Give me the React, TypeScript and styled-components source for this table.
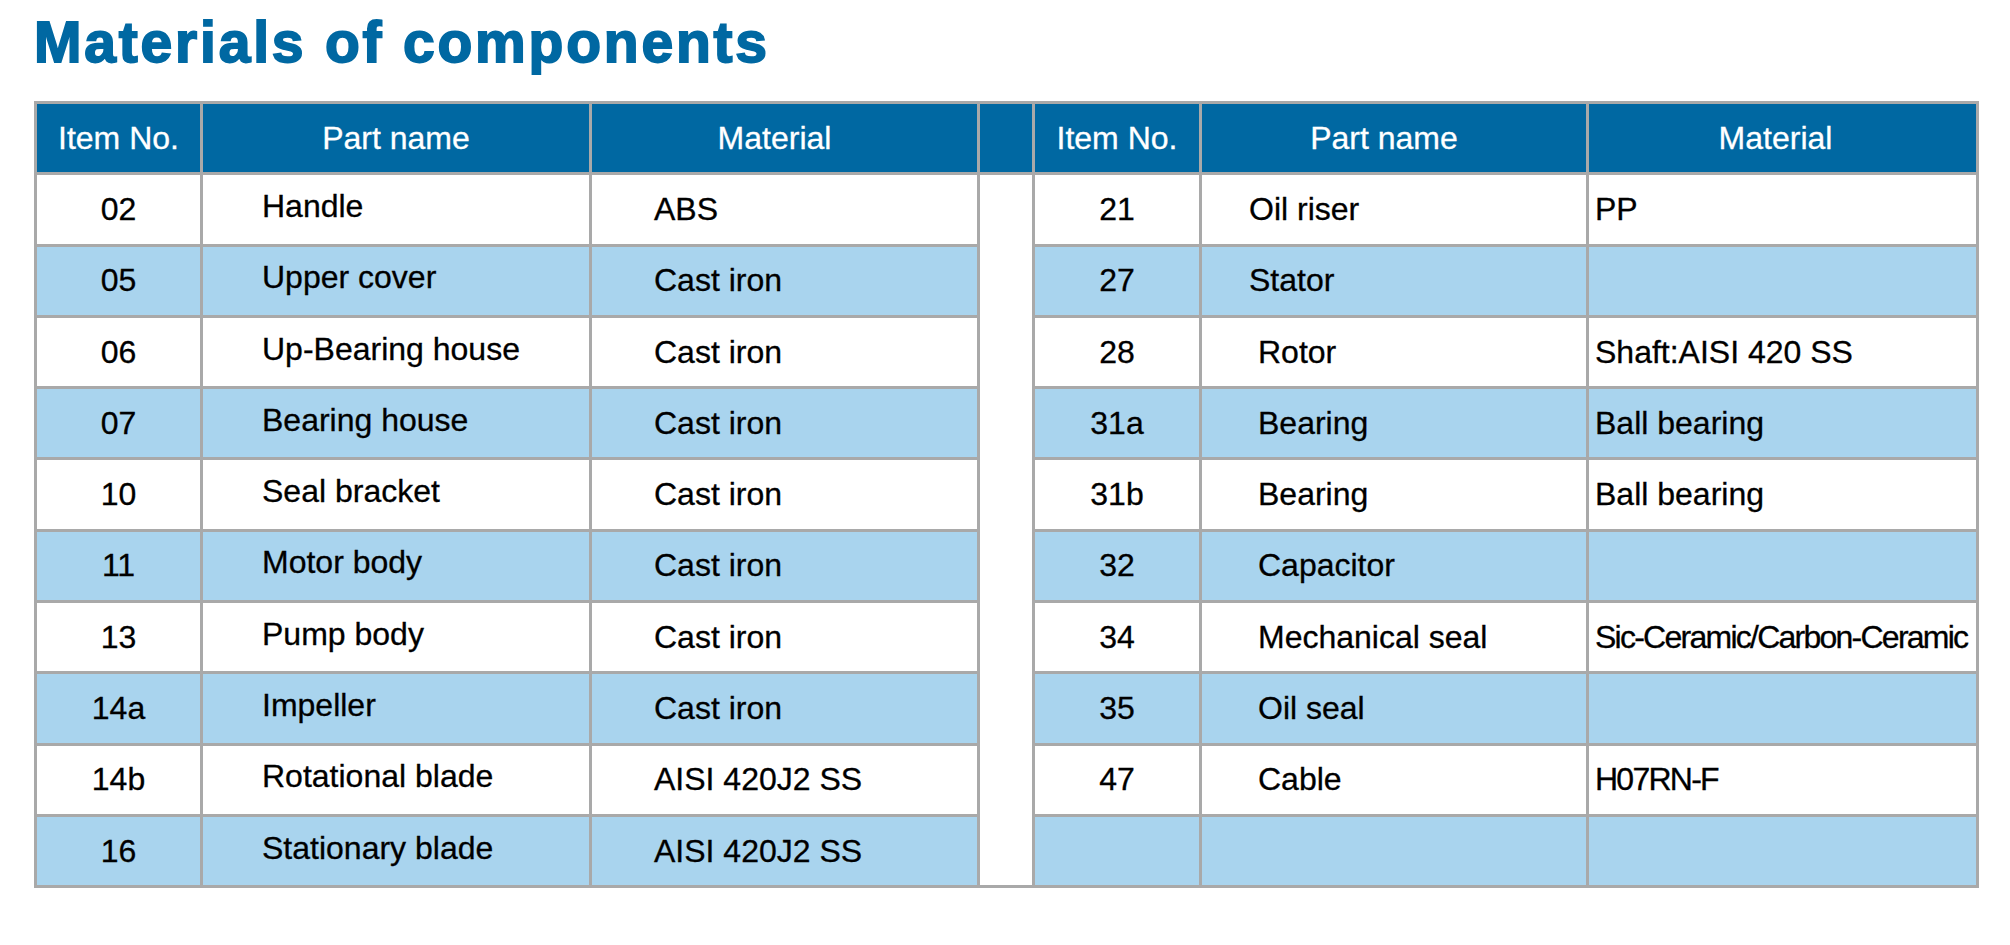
import styled, { createGlobalStyle } from "styled-components";

const GlobalStyle = createGlobalStyle`
  html, body {
    margin: 0;
    padding: 0;
    background: #ffffff;
  }
  body {
    font-family: "Liberation Sans", Arial, Helvetica, sans-serif;
  }
`;

const Page = styled.div`
  width: 2010px;
  height: 945px;
  padding: 14px 0 0 34px;
  box-sizing: border-box;
  background: #ffffff;
`;

const Title = styled.h1`
  margin: 0 0 30px 0;
  font-family: "Liberation Sans", Arial, Helvetica, sans-serif;
  font-size: 57px;
  line-height: 57px;
  font-weight: 700;
  letter-spacing: 2.8px;
  color: #0068a2;
  -webkit-text-stroke: 1.8px #0068a2;
`;

const Table = styled.table`
  width: 1942px;
  table-layout: fixed;
  border-collapse: collapse;
  font-family: "Liberation Sans", Arial, Helvetica, sans-serif;
  font-size: 32px;
  color: #000000;
`;

const Row = styled.tr<{ $shade?: boolean }>`
  height: 71.3px;
  background: ${({ $shade }) => ($shade ? "#a9d4ee" : "#ffffff")};
`;

const HeadRow = styled.tr`
  height: 71.3px;
  background: #0068a2;
`;

const HeadCell = styled.th<{ $shift?: number }>`
  border: 3px solid #a9a9a9;
  padding: 0 ${({ $shift }) => $shift ?? 0}px 0 0;
  color: #ffffff;
  font-weight: 400;
  text-align: center;
  vertical-align: middle;
  white-space: nowrap;
  -webkit-text-stroke: 0.3px #ffffff;
`;

const Cell = styled.td<{
  $align?: "left" | "center";
  $pad?: number;
  $lift?: boolean;
  $tight?: boolean;
}>`
  border: 3px solid #a9a9a9;
  padding: 0 0 ${({ $lift }) => ($lift ? "6px" : "0")}
    ${({ $pad }) => $pad ?? 0}px;
  text-align: ${({ $align }) => $align ?? "left"};
  vertical-align: middle;
  white-space: nowrap;
  overflow: visible;
  letter-spacing: ${({ $tight }) => ($tight ? "-1.75px" : "0")};
  -webkit-text-stroke: 0.3px #000000;
`;

const Spacer = styled.td`
  border: 3px solid #a9a9a9;
  background: #ffffff;
  padding: 0;
`;

type Entry = {
  no: string;
  part: string;
  material: string;
  indent?: number;
  tight?: boolean;
};

const leftItems: Entry[] = [
  { no: "02", part: "Handle", material: "ABS" },
  { no: "05", part: "Upper cover", material: "Cast iron" },
  { no: "06", part: "Up-Bearing house", material: "Cast iron" },
  { no: "07", part: "Bearing house", material: "Cast iron" },
  { no: "10", part: "Seal bracket", material: "Cast iron" },
  { no: "11", part: "Motor body", material: "Cast iron" },
  { no: "13", part: "Pump body", material: "Cast iron" },
  { no: "14a", part: "Impeller", material: "Cast iron" },
  { no: "14b", part: "Rotational blade", material: "AISI 420J2 SS" },
  { no: "16", part: "Stationary blade", material: "AISI 420J2 SS" },
];

const rightItems: Entry[] = [
  { no: "21", part: "Oil riser", material: "PP", indent: 47 },
  { no: "27", part: "Stator", material: "", indent: 47 },
  { no: "28", part: "Rotor", material: "Shaft:AISI 420 SS", indent: 56 },
  { no: "31a", part: "Bearing", material: "Ball bearing", indent: 56 },
  { no: "31b", part: "Bearing", material: "Ball bearing", indent: 56 },
  { no: "32", part: "Capacitor", material: "", indent: 56 },
  {
    no: "34",
    part: "Mechanical seal",
    material: "Sic-Ceramic/Carbon-Ceramic",
    indent: 56,
    tight: true,
  },
  { no: "35", part: "Oil seal", material: "", indent: 56 },
  { no: "47", part: "Cable", material: "H07RN-F", indent: 56, tight: true },
  { no: "", part: "", material: "", indent: 56 },
];

const widths = [166, 389, 388, 55, 167, 387, 390];

const App = () => {
  return (
    <>
      <GlobalStyle />
      <Page>
        <Title>Materials of components</Title>
        <Table>
          <colgroup>
            {widths.map((w, i) => (
              <col key={i} style={{ width: w }} />
            ))}
          </colgroup>
          <thead>
            <HeadRow>
              <HeadCell>Item No.</HeadCell>
              <HeadCell>Part name</HeadCell>
              <HeadCell $shift={20}>Material</HeadCell>
              <HeadCell />
              <HeadCell>Item No.</HeadCell>
              <HeadCell $shift={20}>Part name</HeadCell>
              <HeadCell $shift={14}>Material</HeadCell>
            </HeadRow>
          </thead>
          <tbody>
            {leftItems.map((left, index) => {
              const right = rightItems[index];
              return (
                <Row key={index} $shade={index % 2 === 1}>
                  <Cell $align="center">{left.no}</Cell>
                  <Cell $pad={59} $lift>
                    {left.part}
                  </Cell>
                  <Cell $pad={62}>{left.material}</Cell>
                  {index === 0 && <Spacer rowSpan={leftItems.length} />}
                  <Cell $align="center">{right.no}</Cell>
                  <Cell $pad={right.indent}>{right.part}</Cell>
                  <Cell $pad={6} $tight={right.tight}>
                    {right.material}
                  </Cell>
                </Row>
              );
            })}
          </tbody>
        </Table>
      </Page>
    </>
  );
};

export default App;
